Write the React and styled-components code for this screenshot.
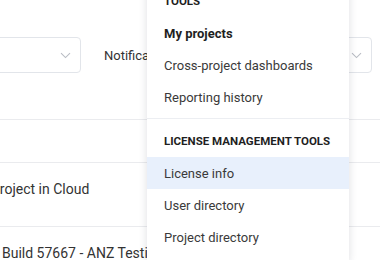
import React from 'react'
import styled, { createGlobalStyle } from 'styled-components'

const GlobalStyle = createGlobalStyle`
  html, body {
    margin: 0;
    padding: 0;
    background: #ffffff;
    font-family: Roboto, "Liberation Sans", sans-serif;
    color: #333;
    overflow: hidden;
  }
`

function Chevron() {
  return (
    <svg width="11" height="7" viewBox="0 0 11 7" fill="none">
      <path d="M1 1.2 L5.5 5.6 L10 1.2" stroke="#b9bdc4" strokeWidth="1.1" />
    </svg>
  )
}

const menuGroups = [
  {
    title: 'Tools',
    items: [
      { label: 'My projects', bold: true },
      { label: 'Cross-project dashboards' },
      { label: 'Reporting history' },
    ],
  },
  {
    title: 'License management tools',
    items: [
      { label: 'License info', active: true },
      { label: 'User directory' },
      { label: 'Project directory' },
    ],
  },
]

export default function App() {
  return (
    <Page>
      <GlobalStyle />
      <FilterBar>
        <Select $width={181}>
          <Chevron />
        </Select>
        <Label>Notifications</Label>
        <Select $width={176}>
          <Chevron />
        </Select>
      </FilterBar>

      <Table>
        <HeaderRow />
        <Row>
          <NameCell $indent={-9}>Project in Cloud</NameCell>
        </Row>
        <Row>
          <NameCell $indent={2}>Build 57667 - ANZ Testing</NameCell>
        </Row>
      </Table>

      <Menu>
        {menuGroups.map((group, i) => (
          <React.Fragment key={group.title}>
            {i > 0 && <Divider />}
            <GroupTitle>{group.title}</GroupTitle>
            {group.items.map((item) => (
              <MenuItem key={item.label} $bold={item.bold} $active={item.active}>
                {item.label}
              </MenuItem>
            ))}
          </React.Fragment>
        ))}
      </Menu>
    </Page>
  )
}

const Page = styled.div`
  position: relative;
  width: 380px;
  height: 260px;
  overflow: hidden;
`

const FilterBar = styled.div`
  display: flex;
  align-items: center;
  padding-top: 37px;
  margin-left: -100px;
  height: 36px;
`

const Select = styled.div`
  box-sizing: border-box;
  width: ${(p) => p.$width}px;
  height: 36px;
  border: 1px solid #e2e5ea;
  border-radius: 4px;
  display: flex;
  align-items: center;
  justify-content: flex-end;
  padding-right: 9px;
  svg {
    display: block;
  }
`

const Label = styled.span`
  font-size: 13px;
  color: #333;
  margin: 0 18px 0 23px;
  white-space: nowrap;
`

const Table = styled.div`
  margin-top: 46px;
  border-top: 1px solid #eaebee;
`

const HeaderRow = styled.div`
  height: 42px;
  border-bottom: 1px solid #eaebee;
`

const Row = styled.div`
  box-sizing: border-box;
  height: 64px;
  padding-top: 16px;
  border-bottom: 1px solid #eaebee;
  display: flex;
`

const NameCell = styled.div`
  margin-left: ${(p) => p.$indent}px;
  font-size: 14px;
  line-height: 20px;
  color: #333;
  white-space: nowrap;
`

const Menu = styled.div`
  position: absolute;
  top: -15px;
  left: 147px;
  width: 202px;
  background: #fff;
  box-shadow: 0 2px 8px rgba(20, 30, 50, 0.14);
  padding-bottom: 8px;
`

const GroupTitle = styled.div`
  height: 32px;
  line-height: 33px;
  padding: 0 12px 0 17px;
  font-size: 11.5px;
  font-weight: 700;
  text-transform: uppercase;
  color: #1f1f1f;
  white-space: nowrap;
`

const MenuItem = styled.div`
  height: 32px;
  line-height: 33px;
  padding: 0 17px;
  font-size: 13px;
  font-weight: ${(p) => (p.$bold ? 700 : 400)};
  color: ${(p) => (p.$bold ? '#1f1f1f' : '#3a3a3a')};
  background: ${(p) => (p.$active ? '#e8f0fc' : 'transparent')};
  white-space: nowrap;
`

const Divider = styled.div`
  height: 1px;
  background: #eceef2;
  margin: 5px 0 6px;
`
